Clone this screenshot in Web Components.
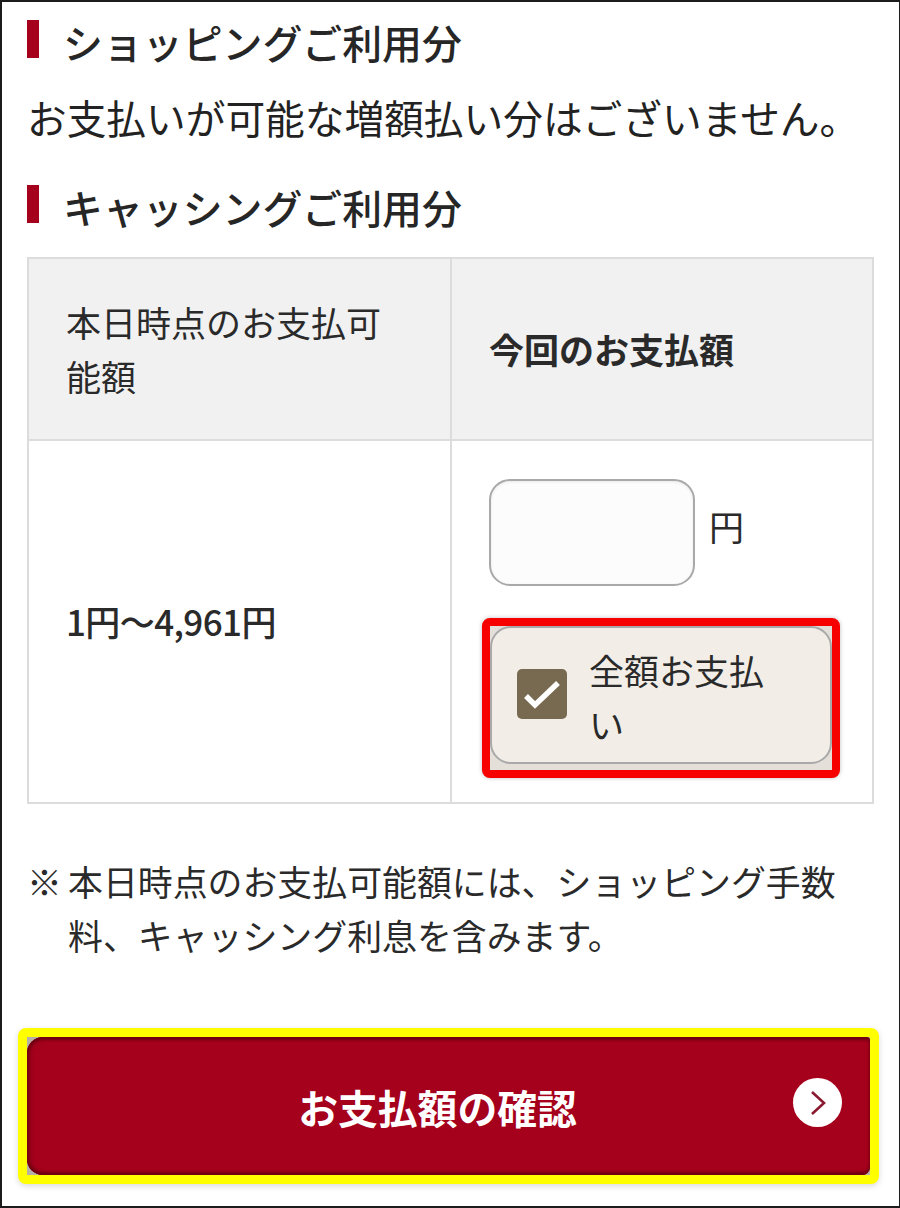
<!DOCTYPE html>
<html lang="ja">
<head>
<meta charset="utf-8">
<title>お支払額の確認</title>
<style>
  html, body { margin: 0; padding: 0; background: #fff; }
  body { font-family: "Noto Sans CJK JP", "Liberation Sans", sans-serif; color: #222; }
</style>
</head>
<body>
<pay-page>
  <section-title>ショッピングご利用分</section-title>
  <p class="msg" slot="msg">お支払いが可能な増額払い分はございません。</p>
  <section-title slot="second">キャッシングご利用分</section-title>
  <pay-table slot="table"></pay-table>
  <pay-note slot="note">本日時点のお支払可能額には、ショッピング手数料、キャッシング利息を含みます。</pay-note>
  <pay-button slot="button">お支払額の確認</pay-button>
</pay-page>

<script>
class PayPage extends HTMLElement {
    constructor() {
        super();
        this.attachShadow({mode: 'open'}).innerHTML = `
        <style>
            :host {
                display: block;
                box-sizing: border-box;
                width: 900px;
                height: 1208px;
                border: 2px solid #1c1c1c;
                border-right-width: 1px;
                padding: 15px 0 0 25px;
                background: #fff;
                overflow: hidden;
            }
            .second { display: block; }
            .table { display: block; margin-top: 27px; }
            .note { display: block; margin-top: 50px; }
            .button { display: block; margin: 66px 0 0 -9px; }
            ::slotted(.msg) {
                margin: 0;
                padding: 24px 0 0 0;
                height: 117px;
                box-sizing: border-box;
                font-size: 39.7px;
                line-height: 56px;
                color: #222;
                white-space: nowrap;
            }
        </style>
        <slot></slot>
        <slot name="msg"></slot>
        <div class="second"><slot name="second"></slot></div>
        <div class="table"><slot name="table"></slot></div>
        <div class="note"><slot name="note"></slot></div>
        <div class="button"><slot name="button"></slot></div>`;
    }
}

class SectionTitle extends HTMLElement {
    constructor() {
        super();
        this.attachShadow({mode: 'open'}).innerHTML = `
        <style>
            :host {
                display: flex;
                align-items: center;
                gap: 24px;
                height: 48px;
                font-size: 39.9px;
                font-weight: 500;
                color: #262626;
                white-space: nowrap;
            }
            .bar { width: 12px; height: 38px; background: #a5001c; flex: none; margin-bottom: 5px; }
        </style>
        <span class="bar"></span><slot></slot>`;
    }
}

class PayTable extends HTMLElement {
    constructor() {
        super();
        this.attachShadow({mode: 'open'}).innerHTML = `
        <style>
            :host {
                display: grid;
                box-sizing: border-box;
                width: 847px;
                height: 547px;
                grid-template-columns: 423px 1fr;
                grid-template-rows: 182px 1fr;
                border: 2px solid #dcdcdc;
                font-size: 35px;
                color: #2a2a2a;
            }
            .cell { box-sizing: border-box; }
            .head { background: #f1f1f1; border-bottom: 2px solid #dcdcdc; display: flex; align-items: center; padding: 0 35px 0 37px; line-height: 54px; }
            .left { border-right: 2px solid #dcdcdc; }
            .strong { font-weight: 700; padding-left: 37px; }
            .range { display: flex; align-items: center; padding: 0 0 3px 37px; box-sizing: border-box; font-weight: 500; letter-spacing: -0.6px; height: 100%; }
            .pay { padding: 38px 0 0 37px; }
            .row { display: flex; align-items: center; gap: 14px; }
            .input { width: 206px; height: 107px; box-sizing: border-box; border: 2px solid #a9a9a9; border-radius: 21px; background: #fcfcfc; box-shadow: inset 0 1px 3px rgba(0,0,0,.08); }
            .yen { padding-bottom: 14px; }
            .mark { margin: 32px 0 0 -7px; width: 358px; height: 160px; box-sizing: border-box; border: 8px solid #f60000; border-radius: 8px; box-shadow: 0 0 4px rgba(0,0,0,.25); overflow: hidden; background: #e4e0d9; }
            .check { box-sizing: border-box; height: 138px; background: #f2eee7; border: 2px solid #a9a9a9; border-radius: 21px; display: flex; align-items: center; padding-left: 25px; gap: 22px; }
            .box { flex: none; width: 50px; height: 50px; margin-top: -3px; border-radius: 5px; background: #786a50; }
            .box svg { display: block; }
            .check span { width: 180px; line-height: 54px; padding-top: 3px; }
        </style>
        <div class="cell head left">本日時点のお支払可能額</div>
        <div class="cell head strong">今回のお支払額</div>
        <div class="cell left"><div class="range">1円〜4,961円</div></div>
        <div class="cell pay">
            <div class="row"><div class="input"></div><div class="yen">円</div></div>
            <div class="mark">
                <div class="check">
                    <div class="box"><svg width="50" height="50" viewBox="0 0 50 50"><path d="M9 27 L18 36 L41 14" fill="none" stroke="#fff" stroke-width="5.5"/></svg></div>
                    <span>全額お支払い</span>
                </div>
            </div>
        </div>`;
    }
}

class PayNote extends HTMLElement {
    constructor() {
        super();
        this.attachShadow({mode: 'open'}).innerHTML = `
        <style>
            :host {
                display: flex;
                font-size: 34.9px;
                line-height: 54px;
                color: #2a2a2a;
                width: 830px;
            }
            .mark { flex: none; width: 41px; }
            .text { flex: 1; }
        </style>
        <div class="mark">※</div><div class="text"><slot></slot></div>`;
    }
}

class PayButton extends HTMLElement {
    constructor() {
        super();
        this.attachShadow({mode: 'open'}).innerHTML = `
        <style>
            :host {
                display: block;
                box-sizing: border-box;
                width: 861px;
                height: 156px;
                border: 9px solid #ffff00;
                border-radius: 8px;
                box-shadow: 0 2px 6px rgba(0,0,0,.15);
                background: #b5b0a8;
            }
            .btn {
                position: relative;
                height: 100%;
                border-radius: 16px 4px 8px 16px;
                background: #a5001c;
                box-shadow: inset 0 3px 3px #6e0012, inset 0 -3px 3px #6e0012, inset 3px 0 4px #7c0015;
                display: flex;
                align-items: center;
                justify-content: center;
                color: #fff;
                font-size: 39.8px;
                font-weight: 700;
                padding-right: 22px;
                box-sizing: border-box;
            }
            .go { position: absolute; right: 28px; top: 41px; width: 49px; height: 49px; border-radius: 50%; background: #fff; display: flex; align-items: center; justify-content: center; }
        </style>
        <div class="btn"><slot></slot>
            <span class="go"><svg width="16" height="26" viewBox="0 0 16 26"><path d="M2 2 L14 13 L2 24" fill="none" stroke="#8a1a30" stroke-width="2.6"/></svg></span>
        </div>`;
    }
}

customElements.define('pay-page', PayPage);
customElements.define('section-title', SectionTitle);
customElements.define('pay-table', PayTable);
customElements.define('pay-note', PayNote);
customElements.define('pay-button', PayButton);
</script>
</body>
</html>
